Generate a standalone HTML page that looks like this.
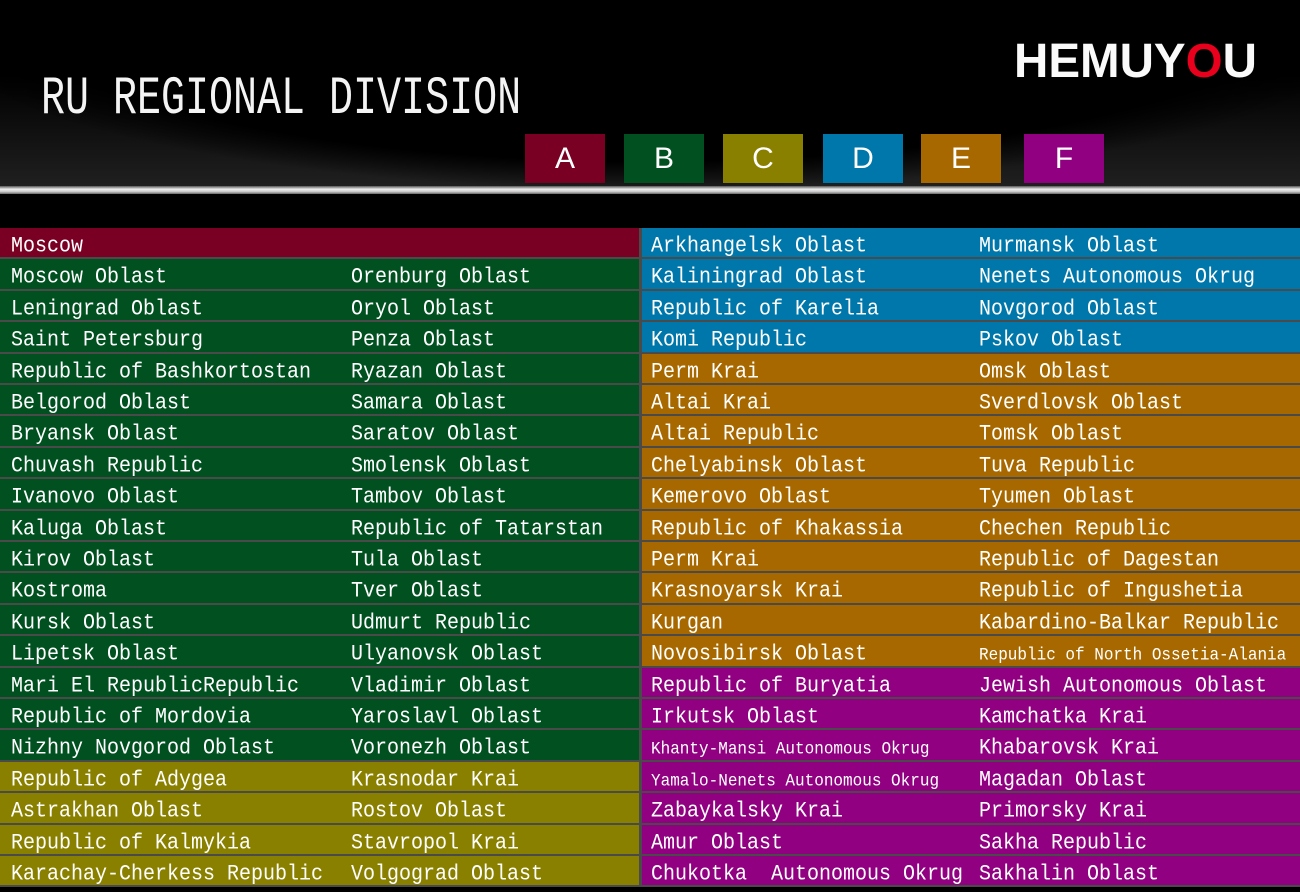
<!DOCTYPE html>
<html><head><meta charset="utf-8"><style>
*{margin:0;padding:0;box-sizing:border-box}
body{width:1300px;height:887px;overflow:hidden;background:#000;font-family:"Liberation Mono","Noto Serif CJK SC",monospace;color:#fff}
#hdr{position:absolute;left:0;top:0;width:1300px;height:188px;background:radial-gradient(ellipse 760px 190px at 650px 0px,#000 85%,rgba(0,0,0,0) 100%),linear-gradient(#000 40%,#202020 100%)}
#bar{position:absolute;left:0;top:186px;width:1300px;height:8px;background:linear-gradient(#555,#eee 40%,#ccc 70%,#666)}
#title{position:absolute;left:41px;top:70px;font-size:40px;letter-spacing:0;transform:scaleY(1.35);transform-origin:0 0;color:#f4f4f4;white-space:nowrap}
#logo{position:absolute;left:1014px;top:34px;font-family:"Liberation Sans",sans-serif;font-weight:bold;font-size:48px;letter-spacing:0;transform:scaleX(0.99);transform-origin:0 0;color:#fafafa}
#logo span{color:#e8001c}
.b{position:absolute;top:134px;width:80px;height:49px;font-family:"Liberation Sans",sans-serif;font-size:30px;text-align:center;line-height:49px;color:#fff}
.row{position:absolute;height:31.4px;border-bottom:2px solid #4a4a4a;font-size:20px;line-height:31px;white-space:nowrap}
.row span{position:absolute;top:3px;transform:scaleY(1.1)}
.sm{font-size:16px}
</style></head><body>
<div id="hdr"></div><div id="bar"></div>
<div id="title">RU REGIONAL DIVISION</div>
<div id="logo">HEMUY<span>O</span>U</div>
<div class="b" style="left:525px;background:#7a0023">A</div>
<div class="b" style="left:624px;background:#005020">B</div>
<div class="b" style="left:723px;background:#8a8000">C</div>
<div class="b" style="left:823px;background:#0077aa">D</div>
<div class="b" style="left:921px;background:#a86800">E</div>
<div class="b" style="left:1024px;background:#900080">F</div>
<div id="rows"></div>
<div style="position:absolute;left:639px;top:228px;width:3px;height:659px;background:#4a4a4a"></div>
<script>
var L=[["#7a0023","Moscow",""],
["#005020","Moscow Oblast","Orenburg Oblast"],["#005020","Leningrad Oblast","Oryol Oblast"],["#005020","Saint Petersburg","Penza Oblast"],["#005020","Republic of Bashkortostan","Ryazan Oblast"],["#005020","Belgorod Oblast","Samara Oblast"],["#005020","Bryansk Oblast","Saratov Oblast"],["#005020","Chuvash Republic","Smolensk Oblast"],["#005020","Ivanovo Oblast","Tambov Oblast"],["#005020","Kaluga Oblast","Republic of Tatarstan"],["#005020","Kirov Oblast","Tula Oblast"],["#005020","Kostroma","Tver Oblast"],["#005020","Kursk Oblast","Udmurt Republic"],["#005020","Lipetsk Oblast","Ulyanovsk Oblast"],["#005020","Mari El RepublicRepublic","Vladimir Oblast"],["#005020","Republic of Mordovia","Yaroslavl Oblast"],["#005020","Nizhny Novgorod Oblast","Voronezh Oblast"],
["#8a8000","Republic of Adygea","Krasnodar Krai"],["#8a8000","Astrakhan Oblast","Rostov Oblast"],["#8a8000","Republic of Kalmykia","Stavropol Krai"],["#8a8000","Karachay-Cherkess Republic","Volgograd Oblast"]];
var R=[["#0077aa","Arkhangelsk Oblast","Murmansk Oblast"],["#0077aa","Kaliningrad Oblast","Nenets Autonomous Okrug"],["#0077aa","Republic of Karelia","Novgorod Oblast"],["#0077aa","Komi Republic","Pskov Oblast"],
["#a86800","Perm Krai","Omsk Oblast"],["#a86800","Altai Krai","Sverdlovsk Oblast"],["#a86800","Altai Republic","Tomsk Oblast"],["#a86800","Chelyabinsk Oblast","Tuva Republic"],["#a86800","Kemerovo Oblast","Tyumen Oblast"],["#a86800","Republic of Khakassia","Chechen Republic"],["#a86800","Perm Krai","Republic of Dagestan"],["#a86800","Krasnoyarsk Krai","Republic of Ingushetia"],["#a86800","Kurgan","Kabardino-Balkar Republic"],["#a86800","Novosibirsk Oblast","<i class=sm style='font-style:normal'>Republic of North Ossetia-Alania</i>"],
["#900080","Republic of Buryatia","Jewish Autonomous Oblast"],["#900080","Irkutsk Oblast","Kamchatka Krai"],["#900080","<i class=sm style='font-style:normal'>Khanty-Mansi Autonomous Okrug</i>","Khabarovsk Krai"],["#900080","<i class=sm style='font-style:normal'>Yamalo-Nenets Autonomous Okrug</i>","Magadan Oblast"],["#900080","Zabaykalsky Krai","Primorsky Krai"],["#900080","Amur Oblast","Sakha Republic"],["#900080","Chukotka  Autonomous Okrug","Sakhalin Oblast"]];
var h="";
for(var i=0;i<21;i++){var t=228+i*31.4;
var a=L[i];h+='<div class="row" style="left:0;width:640px;top:'+t+'px;background:'+a[0]+'"><span style="left:11px">'+a[1]+'</span><span style="left:351px">'+a[2]+'</span></div>';
var b=R[i];h+='<div class="row" style="left:640px;width:660px;top:'+t+'px;background:'+b[0]+'"><span style="left:11px">'+b[1].replace(/  /g,'&nbsp; ')+'</span><span style="left:339px">'+b[2]+'</span></div>';}
document.getElementById('rows').innerHTML=h;
</script>
</body></html>
